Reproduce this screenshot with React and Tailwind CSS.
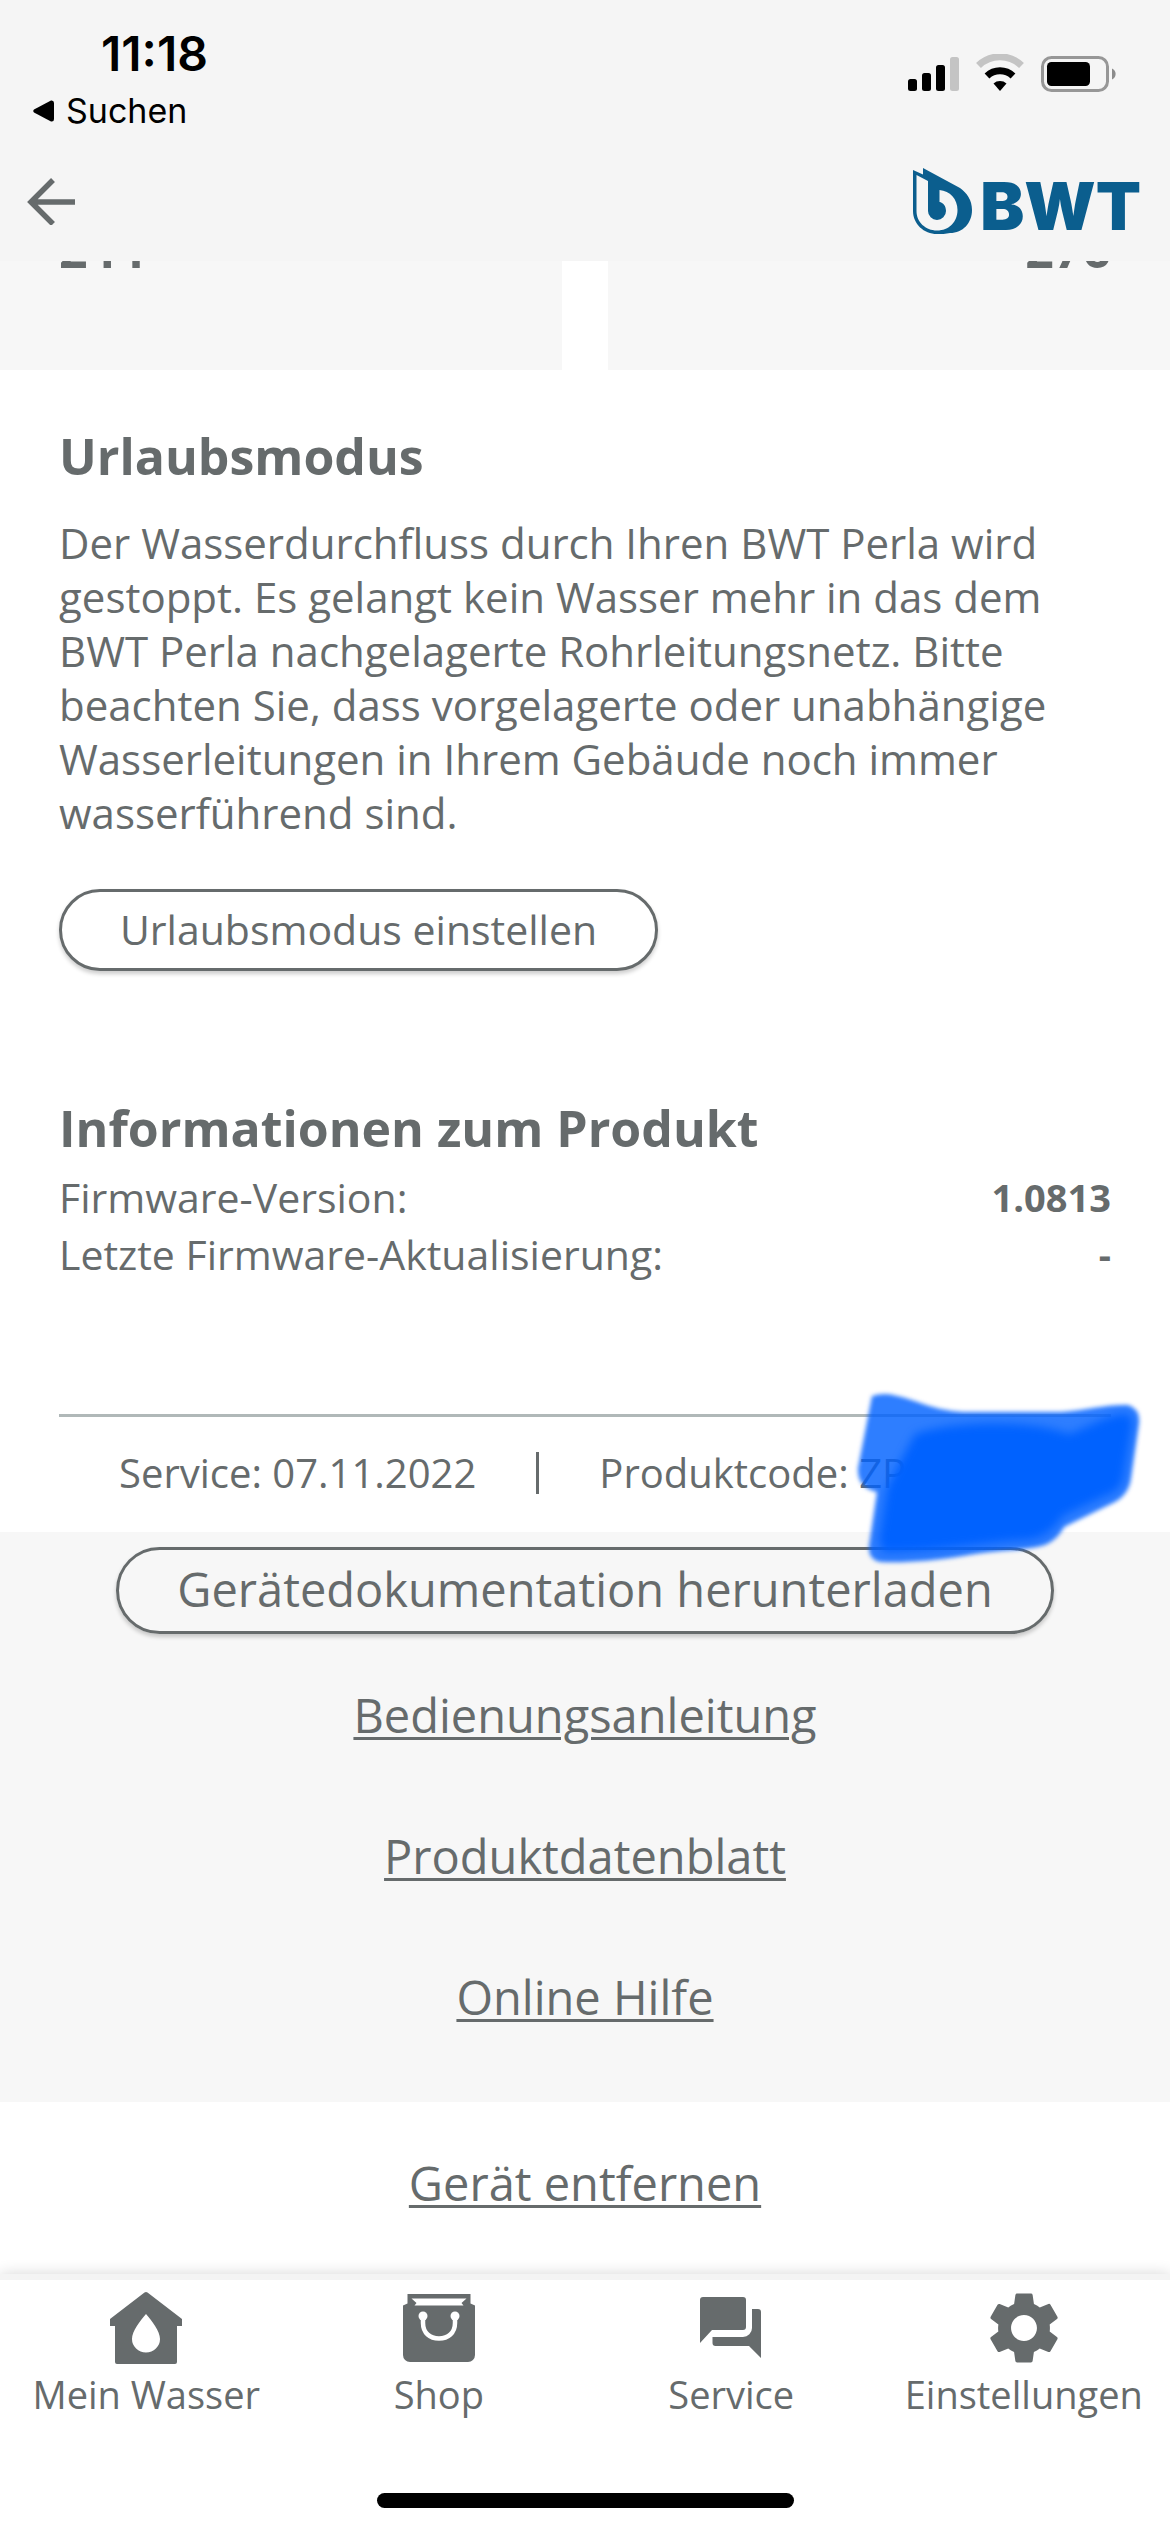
import { MdSettings } from "react-icons/md";

const links = ["Bedienungsanleitung", "Produktdatenblatt", "Online Hilfe"];

const firmware = [
  { label: "Firmware-Version:", value: "1.0813" },
  { label: "Letzte Firmware-Aktualisierung:", value: "-" },
];

const tabs = [
  { name: "Mein Wasser", icon: HouseIcon },
  { name: "Shop", icon: BagIcon },
  { name: "Service", icon: ChatIcon },
  { name: "Einstellungen", icon: GearIcon },
];

function HouseIcon() {
  return (
    <svg viewBox="0 0 72 72" className="size-[72px]" fill="currentColor" fillRule="evenodd" aria-hidden="true">
      <path d="M34.5 .6a2.5 2.5 0 0 1 3 0L72 27v7h-5v36a2 2 0 0 1-2 2H7a2 2 0 0 1-2-2V34H0v-7ZM36 22C30 29 22 39 22 47a14 13.5 0 0 0 28 0C50 39 42 29 36 22Z" />
    </svg>
  );
}

function BagIcon() {
  return (
    <svg viewBox="0 -2 72 72" className="size-[72px]" aria-hidden="true">
      <path
        fill="currentColor"
        fillRule="evenodd"
        d="M4.500 0h63v9.500l4.500 2V61a7 7 0 0 1-7 7H7a7 7 0 0 1-7-7V11.500l4.500-2ZM8.500 4.500 13.500 9 11.500 11.500h49L58.500 9l5-4.500Z"
      />
      <circle cx="20" cy="22" r="4.500" fill="#fff" />
      <circle cx="52" cy="22" r="4.500" fill="#fff" />
      <path d="M20 23v6c0 10 7 15.500 16 15.500S52 39 52 29v-6" fill="none" stroke="#fff" strokeWidth="4.500" />
    </svg>
  );
}

function ChatIcon() {
  return (
    <svg viewBox="-5 -5 72 72" className="size-[72px]" fill="currentColor" aria-hidden="true">
      <path d="M3 0h40a3 3 0 0 1 3 3v27a3 3 0 0 1-3 3H12L0 46V3a3 3 0 0 1 3-3Z" />
      <path d="M52 12h6a3 3 0 0 1 3 3v46L49 49H15.500a3 3 0 0 1-3-3v-6H43a9 9 0 0 0 9-9Z" />
    </svg>
  );
}

function GearIcon() {
  return <MdSettings viewBox="2 2 20 20" className="size-[72px]" aria-hidden="true" />;
}

function StatusIcons() {
  return (
    <svg viewBox="0 0 208 38" className="h-[38px] w-[208px]" aria-hidden="true">
      <rect x="0" y="25" width="9" height="12" rx="2.500" />
      <rect x="14" y="19" width="9" height="18" rx="2.500" />
      <rect x="28" y="11" width="9" height="26" rx="2.500" />
      <rect x="42" y="3" width="9" height="34" rx="2.500" fill="#c4c4c4" />
      <path d="M70.500 11.500a31 31 0 0 1 43 0" fill="none" stroke="#c4c4c4" strokeWidth="7" />
      <path d="M79 22a19 19 0 0 1 26 0" fill="none" stroke="#000" strokeWidth="7" />
      <path d="M85.500 29.500a10 10 0 0 1 13 0L92 37Z" />
      <rect x="134.500" y="3.500" width="65" height="33" rx="9" fill="none" stroke="#979797" strokeWidth="3" />
      <rect x="139" y="8" width="43" height="24" rx="4.500" />
      <path d="M204 14.500a6 6 0 0 1 0 11Z" fill="#8b8b8b" />
    </svg>
  );
}

function Logo() {
  return (
    <a href="#start" aria-label="BWT" className="flex items-end gap-2 text-[#0b5e8e]">
      <svg viewBox="0 0 59 66" className="h-[66px] w-[59px]" fill="currentColor" fillRule="evenodd" aria-hidden="true">
        <path d="M0 2 10 6.500V0L47 20C54 25 59 32 59 42 59 55 50 65 37 65 33 66 28 66 24 66 11 66 0 56 0 43ZM3.500 7V43c0 11 9 19.500 20.500 19.500C36 62.500 44.500 54 44.500 42 44.500 31 37 23 26.500 22V34c3.500 .5 6.500 4 6.500 9a9 9 0 0 1-18 0V13Z" />
      </svg>
      <span className="font-['Inter',sans-serif] text-[66px] leading-[56px] font-black">BWT</span>
    </a>
  );
}

/* Marker strokes that hide the product code */
function Marker() {
  return (
    <svg viewBox="-10 -10 320 200" className="absolute -top-[37px] -right-[50px] h-[200px] w-[320px]" aria-hidden="true">
      <defs>
        <filter id="soft" x="-10%" y="-10%" width="120%" height="120%">
          <feGaussianBlur stdDeviation="2" />
        </filter>
        <filter id="softer" x="-10%" y="-10%" width="120%" height="120%">
          <feGaussianBlur stdDeviation="5" />
        </filter>
      </defs>
      <path
        filter="url(#soft)"
        fill="#0062ff"
        fillOpacity="0.82"
        d="M21 6Q34 2 46 6C66 10 80 20 112 22H210C236 20 258 14 277 15Q289 19 288 32L280 88Q278 104 264 112L213 137Q204 154 186 157C166 161 142 160 112 166C82 171 54 173 30 172Q17 170 18 156L26 102Q6 98 7 78Z"
      />
      <path
        filter="url(#softer)"
        fill="#0062ff"
        d="M64 44C96 32 176 28 218 44C240 36 262 22 278 24L282 32L272 90Q268 102 254 106L212 126Q198 148 176 150C132 152 84 162 32 162L28 150L36 98L48 74Z"
      />
    </svg>
  );
}

export default function App() {
  return (
    <div className="min-h-screen bg-white font-['Open_Sans',sans-serif] text-[#666b6c]">
      <header className="bg-[#f5f5f5]">
        <div className="flex h-[141px] justify-between pt-[26px] pr-[54px] pl-[33px] font-['Inter',sans-serif] text-black">
          <div>
            <p className="pl-[68px] text-[48px] leading-[56px] font-semibold">11:18</p>
            <a href="#suchen" className="mt-[9px] flex items-center gap-3 text-[34px] leading-[40px]">
              <svg viewBox="0 0 21 22" className="h-[22px] w-[21px]" aria-hidden="true">
                <path d="M1 9.500 18 .5Q21 0 21 3V19Q21 22 18 21.500L1 12.500Q-.5 11 1 9.500Z" />
              </svg>
              Suchen
            </a>
          </div>
          <div className="pt-7">
            <StatusIcons />
          </div>
        </div>
        <div className="flex h-[120px] items-center justify-between pr-[29px] pl-[27px]">
          <button type="button" aria-label="Zurück">
            <svg viewBox="0 0 48 48" className="size-12" fill="none" stroke="currentColor" strokeWidth="5.500" aria-hidden="true">
              <path d="M48 25H4M26 3 4 25 26 47" />
            </svg>
          </button>
          <Logo />
        </div>
      </header>

      <main>
        <div className="grid grid-cols-2 gap-[46px] text-[50px] leading-[48px] font-bold">
          <div className="h-[109px] overflow-hidden bg-[#f7f7f7] px-[59px]">
            <p className="-mt-9">244</p>
          </div>
          <div className="h-[109px] overflow-hidden bg-[#f7f7f7] px-[59px] text-right">
            <p className="-mt-9">276</p>
          </div>
        </div>

        <section className="px-[59px] pt-[56px]">
          <h2 className="text-[50px] leading-[60px] font-bold">Urlaubsmodus</h2>
          <p className="mt-[30px] pr-5 text-[42px] leading-[54px]">
            Der Wasserdurchfluss durch Ihren BWT Perla wird gestoppt. Es gelangt kein Wasser mehr in das dem
            BWT Perla nachgelagerte Rohrleitungsnetz. Bitte beachten Sie, dass vorgelagerte oder unabhängige
            Wasserleitungen in Ihrem Gebäude noch immer wasserführend sind.
          </p>
          <button
            type="button"
            className="mt-[49px] block h-[82px] w-[599px] max-w-full rounded-full border-3 bg-white text-[41px] shadow-[0_3px_4px_rgba(0,0,0,0.2)]"
          >
            Urlaubsmodus einstellen
          </button>
        </section>

        <section className="px-[59px] pt-[127px]">
          <h2 className="text-[50px] leading-[60px] font-bold">Informationen zum Produkt</h2>
          <dl className="mt-[11px] text-[41px] leading-[57px]">
            {firmware.map((f) => (
              <div key={f.label} className="flex justify-between">
                <dt>{f.label}</dt>
                <dd className="text-[38px] font-bold">{f.value}</dd>
              </div>
            ))}
          </dl>

          <div className="relative mt-[131px] border-t-3 border-[#b0b8b8] pt-[35px] pb-[38px]">
            <div className="flex gap-[60px] pl-[60px] text-[40px] leading-[42px] whitespace-nowrap">
              <span>Service: 07.11.2022</span>
              <span className="h-[42px] w-[3px] bg-[#666b6c]" />
              <span>Produktcode: ZP</span>
            </div>
            <Marker />
          </div>
        </section>

        <section className="flex flex-col items-center bg-[#f7f7f7] pt-[15px] pb-[75px] text-[47px] leading-[60px]">
          <button
            type="button"
            className="h-[87px] w-[938px] max-w-full rounded-full border-3 pb-1 shadow-[0_3px_4px_rgba(0,0,0,0.2)]"
          >
            Gerätedokumentation herunterladen
          </button>
          <div className="mt-[51px] flex flex-col items-center gap-[81px]">
            {links.map((l) => (
              <a key={l} href="#dokumente" className="underline decoration-3 underline-offset-4">{l}</a>
            ))}
          </div>
        </section>

        <section className="pt-[51px] pb-[61px] text-center text-[47px] leading-[60px]">
          <a href="#entfernen" className="underline decoration-3 underline-offset-4">Gerät entfernen</a>
        </section>
      </main>

      <nav className="border-t-6 border-[#f4f4f4] bg-white pt-3 pb-6 shadow-[0_0_14px_rgba(0,0,0,0.16)]">
        <div className="grid grid-cols-4">
          {tabs.map((t) => (
            <a key={t.name} href="#tab" className="flex flex-col items-center gap-[7px] text-[38px] leading-[46px]">
              <t.icon />
              {t.name}
            </a>
          ))}
        </div>
        <div className="mx-auto mt-[76px] h-[15px] w-[417px] rounded-full bg-black" />
      </nav>
    </div>
  );
}
